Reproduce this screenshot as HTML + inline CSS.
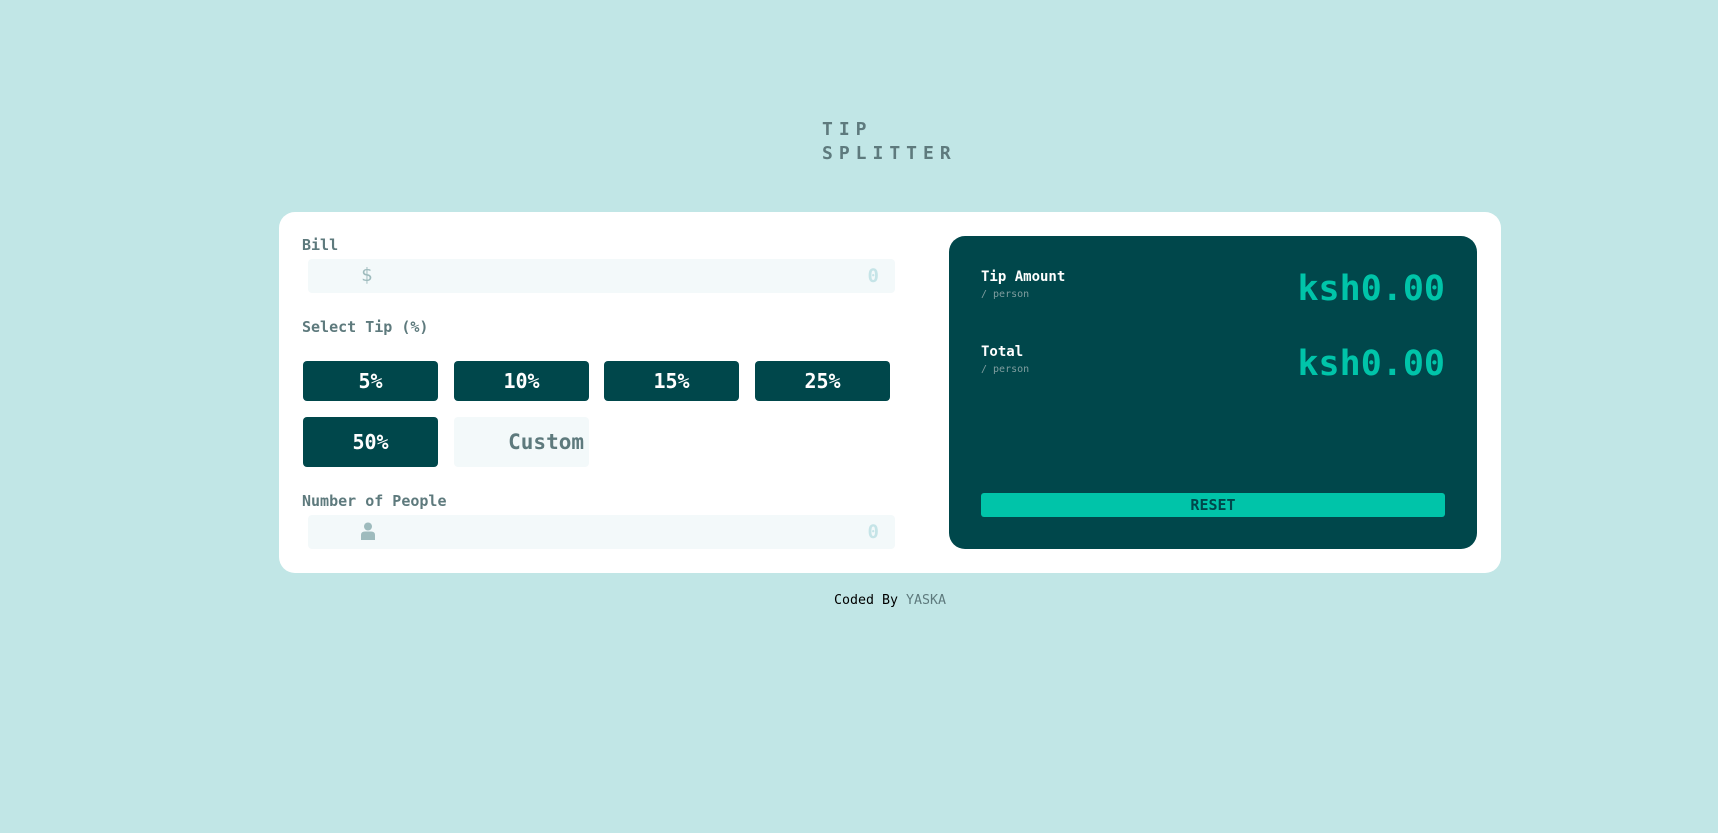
<!DOCTYPE html>
<html><head><meta charset="utf-8"><style>
*{margin:0;padding:0;box-sizing:border-box}
html,body{width:1718px;height:833px;background:#c1e6e6;font-family:"DejaVu Sans Mono","Liberation Mono",monospace;overflow:hidden;position:relative}
.a{position:absolute}
.title{left:822px;top:118px;font-size:18px;font-weight:bold;letter-spacing:6px;line-height:24px;color:#5e7a7d}
.card{left:279px;top:212px;width:1222px;height:361px;background:#fff;border-radius:16px}
.lbl{font-size:15px;font-weight:bold;color:#5e7a7d;line-height:18px}
.inp{width:587px;height:34px;background:#f3f9fa;border-radius:4px}
.inp .z{position:absolute;right:16px;top:6px;font-size:19px;font-weight:bold;color:#c5e4e7}
.btn{width:135px;height:40px;background:#00474b;border-radius:4px;color:#fff;font-size:20px;font-weight:bold;text-align:center;line-height:40px}
.panel{left:949px;top:236px;width:528px;height:313px;background:#00474b;border-radius:16px}
.pl{font-size:14px;font-weight:bold;color:#fff}
.ps{font-size:10px;color:#7f9d9f}
.val{font-size:35px;font-weight:bold;color:#00c4a9;right:32px;line-height:40px}
</style></head><body>
<div class="a title">TIP<br>SPLITTER</div>
<div class="a card"></div>
<div class="a lbl" style="left:302px;top:236px">Bill</div>
<div class="a inp" style="left:308px;top:259px"><span class="a" style="left:53px;top:5px;font-size:19px;color:#9ebbbd">$</span><span class="z">0</span></div>
<div class="a lbl" style="left:302px;top:318px">Select Tip (%)</div>
<div class="a btn" style="left:303px;top:361px">5%</div>
<div class="a btn" style="left:454px;top:361px">10%</div>
<div class="a btn" style="left:604px;top:361px">15%</div>
<div class="a btn" style="left:755px;top:361px">25%</div>
<div class="a btn" style="left:303px;top:417px;height:50px;line-height:50px">50%</div>
<div class="a btn" style="left:454px;top:417px;height:50px;line-height:50px;background:#f3f9fa;color:#5e7a7d;text-align:right;padding-right:5px;font-size:21px">Custom</div>
<div class="a lbl" style="left:302px;top:492px">Number of People</div>
<div class="a inp" style="left:308px;top:515px"><svg class="a" style="left:53px;top:7px" width="14" height="18" viewBox="0 0 14 18"><circle cx="7" cy="4.5" r="4" fill="#9ebbbd"/><path d="M0 18V13Q0 9.5 4 9.5H10Q14 9.5 14 13V18Z" fill="#9ebbbd"/></svg><span class="z">0</span></div>
<div class="a panel">
<div class="a pl" style="left:32px;top:33px">Tip Amount</div>
<div class="a ps" style="left:32px;top:53px">/ person</div>
<div class="a val" style="top:33px">ksh0.00</div>
<div class="a pl" style="left:32px;top:108px">Total</div>
<div class="a ps" style="left:32px;top:128px">/ person</div>
<div class="a val" style="top:108px">ksh0.00</div>
<div class="a" style="left:32px;top:257px;width:464px;height:24px;background:#00c4a9;border-radius:3px;color:#00474b;font-size:15px;font-weight:bold;text-align:center;line-height:24px">RESET</div>
</div>
<div class="a" style="left:0;width:1780px;text-align:center;top:593px;font-size:13.3px;color:#000">Coded By <span style="color:#5e7a7d">YASKA</span></div>
</body></html>
